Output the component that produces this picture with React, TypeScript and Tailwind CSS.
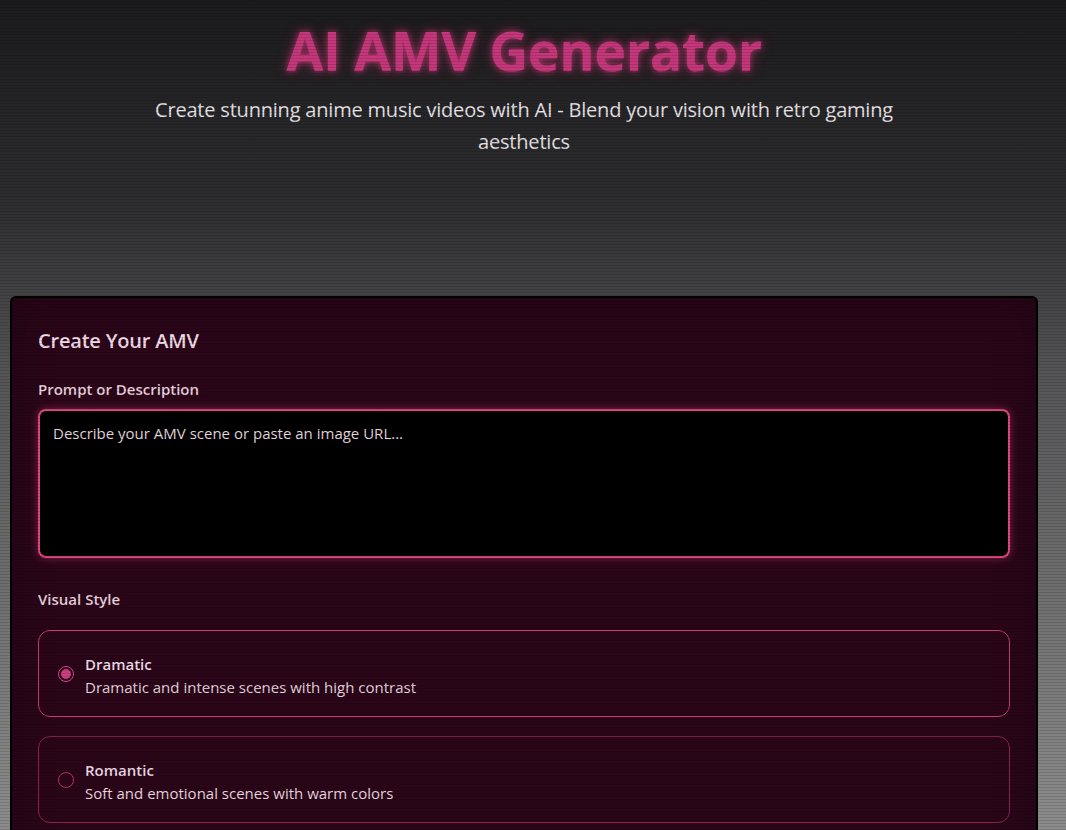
import React, { useState } from 'react';

const styles = [
  { id: 'dramatic', name: 'Dramatic', description: 'Dramatic and intense scenes with high contrast' },
  { id: 'romantic', name: 'Romantic', description: 'Soft and emotional scenes with warm colors' },
  { id: 'action', name: 'Action', description: 'Fast-paced scenes with dynamic motion' },
];

const App: React.FC = () => {
  const [style, setStyle] = useState('dramatic');
  const [prompt, setPrompt] = useState('');

  return (
    <div
      className="relative min-h-screen bg-fixed bg-[linear-gradient(to_bottom,#1b1a1c_0%,#2e2d2f_25%,#555456_45%,#8c8c8c_100%)] pl-[10px] pr-[28px] pb-16"
      style={{ fontFamily: '"Open Sans", "Noto Sans", sans-serif' }}
    >
      {/* scanlines */}
      <div className="pointer-events-none fixed inset-0 z-10 bg-[repeating-linear-gradient(0deg,rgba(0,0,0,0.13)_0px,rgba(0,0,0,0.13)_1px,transparent_1px,transparent_3px)]" />

      {/* Header */}
      <header className="flex flex-col items-center pt-[14px] text-center">
        <h1 className="text-[54px] font-bold leading-[72px] tracking-[-0.5px] text-[#c4377a] [text-shadow:0_0_6px_rgba(255,70,150,0.55),0_0_14px_rgba(255,60,140,0.35)]">
          AI AMV Generator
        </h1>
        <p className="mt-[8px] max-w-[760px] text-[20px] leading-[32px] tracking-[-0.2px] text-[#e6e2e6]">
          Create stunning anime music videos with AI - Blend your vision with retro gaming aesthetics
        </p>
      </header>

      {/* Form card */}
      <main className="mt-[138px] rounded-md border-2 border-black bg-[#2b0619] px-[26px] pt-7 pb-8 shadow-[inset_0_0_40px_rgba(0,0,0,0.25)]">
        <h2 className="text-[20px] font-semibold leading-[30px] tracking-[-0.2px] text-[#efdbe6]">Create Your AMV</h2>

        <label className="mt-[22px] block text-[15px] font-semibold leading-[22px] text-[#e8d3de]">
          Prompt or Description
        </label>
        <textarea
          value={prompt}
          onChange={e => setPrompt(e.target.value)}
          placeholder="Describe your AMV scene or paste an image URL..."
          className="mt-[9px] block h-[149px] w-full resize-none rounded-lg border-2 border-[#e0477f] bg-black px-[13px] py-[11px] text-[15px] leading-[22px] text-[#eadde4] placeholder:text-[#e4d6de] shadow-[0_0_8px_rgba(236,72,140,0.45)] focus:outline-none"
        />

        <h3 className="mt-[30px] text-[15px] font-semibold leading-[22px] text-[#e8d3de]">Visual Style</h3>

        <div className="mt-5 flex flex-col gap-[19px]">
          {styles.map(s => {
            const active = s.id === style;
            return (
              <button
                key={s.id}
                type="button"
                onClick={() => setStyle(s.id)}
                className={
                  'flex h-[87px] w-full items-center gap-[11px] rounded-xl border pl-[19px] pr-5 text-left ' +
                  (active ? 'border-[#c53a79]' : 'border-[#8c2258]')
                }
              >
                <span
                  className={
                    'flex h-[16px] w-[16px] shrink-0 items-center justify-center rounded-full border-[1.5px] ' +
                    (active ? 'border-[#d4478a]' : 'border-[#c02f6e]')
                  }
                >
                  {active && <span className="h-[10px] w-[10px] rounded-full bg-[#cc3f80]" />}
                </span>
                <span className="flex flex-col pt-[4px]">
                  <span className="text-[15px] font-semibold leading-[22px] text-[#eddbe5]">{s.name}</span>
                  <span className="text-[15px] leading-[24px] text-[#e6d6df]">{s.description}</span>
                </span>
              </button>
            );
          })}
        </div>
      </main>
    </div>
  );
};

export default App;
